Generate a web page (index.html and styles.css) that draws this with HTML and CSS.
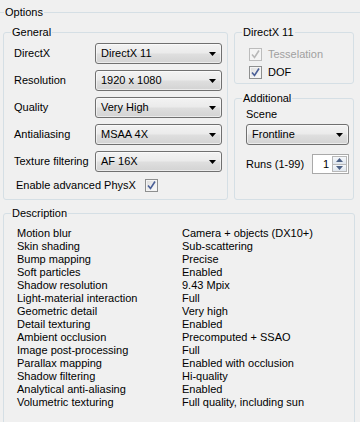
FILE: index.html
```html
<!DOCTYPE html>
<html lang="en">

<head>
    <meta charset="UTF-8">
    <meta name="viewport" content="width=device-width, initial-scale=1.0">
    <title>Options</title>
    <link rel="stylesheet" href="styles.css">
</head>

<body>
    <fieldset class="group options">
        <legend>Options</legend>
        <div class="options-body">
            <div class="top-row">
                <fieldset class="group general">
                    <legend>General</legend>
                    <div class="group-body">
                        <div class="form-grid">
                            <label>DirectX</label>
                            <div class="combo"><span>DirectX 11</span><svg class="arrow" width="7" height="4" viewBox="0 0 7 4"><path d="M0 0H7L3.5 4Z" /></svg></div>

                            <label>Resolution</label>
                            <div class="combo"><span>1920 x 1080</span><svg class="arrow" width="7" height="4" viewBox="0 0 7 4"><path d="M0 0H7L3.5 4Z" /></svg></div>

                            <label>Quality</label>
                            <div class="combo"><span>Very High</span><svg class="arrow" width="7" height="4" viewBox="0 0 7 4"><path d="M0 0H7L3.5 4Z" /></svg></div>

                            <label>Antialiasing</label>
                            <div class="combo"><span>MSAA 4X</span><svg class="arrow" width="7" height="4" viewBox="0 0 7 4"><path d="M0 0H7L3.5 4Z" /></svg></div>

                            <label>Texture filtering</label>
                            <div class="combo"><span>AF 16X</span><svg class="arrow" width="7" height="4" viewBox="0 0 7 4"><path d="M0 0H7L3.5 4Z" /></svg></div>
                        </div>
                        <div class="physx">
                            <span>Enable advanced PhysX</span>
                            <span class="check"><svg width="9" height="9" viewBox="0 0 9 9"><path d="M1 4.5L3.5 7.5L8 0.5" /></svg></span>
                        </div>
                    </div>
                </fieldset>

                <div class="side">
                    <fieldset class="group dx11">
                        <legend>DirectX 11</legend>
                        <div class="group-body">
                            <div class="check-row disabled">
                                <span class="check"><svg width="9" height="9" viewBox="0 0 9 9"><path d="M1 4.5L3.5 7.5L8 0.5" /></svg></span>
                                <span>Tesselation</span>
                            </div>
                            <div class="check-row">
                                <span class="check"><svg width="9" height="9" viewBox="0 0 9 9"><path d="M1 4.5L3.5 7.5L8 0.5" /></svg></span>
                                <span>DOF</span>
                            </div>
                        </div>
                    </fieldset>

                    <fieldset class="group additional">
                        <legend>Additional</legend>
                        <div class="group-body">
                            <div class="scene-label">Scene</div>
                            <div class="combo scene"><span>Frontline</span><svg class="arrow" width="7" height="4" viewBox="0 0 7 4"><path d="M0 0H7L3.5 4Z" /></svg></div>
                            <div class="runs">
                                <span>Runs (1-99)</span>
                                <div class="spin">
                                    <span class="spin-value">1</span>
                                    <div class="spin-buttons">
                                        <span class="spin-btn"><svg width="7" height="4" viewBox="0 0 7 4"><path d="M0 4H7L3.5 0Z" /></svg></span>
                                        <span class="spin-btn"><svg width="7" height="4" viewBox="0 0 7 4"><path d="M0 0H7L3.5 4Z" /></svg></span>
                                    </div>
                                </div>
                            </div>
                        </div>
                    </fieldset>
                </div>
            </div>

            <fieldset class="group description">
                <legend>Description</legend>
                <div class="group-body desc-grid">
                    <span>Motion blur</span><span>Camera + objects (DX10+)</span>
                    <span>Skin shading</span><span>Sub-scattering</span>
                    <span>Bump mapping</span><span>Precise</span>
                    <span>Soft particles</span><span>Enabled</span>
                    <span>Shadow resolution</span><span>9.43 Mpix</span>
                    <span>Light-material interaction</span><span>Full</span>
                    <span>Geometric detail</span><span>Very high</span>
                    <span>Detail texturing</span><span>Enabled</span>
                    <span>Ambient occlusion</span><span>Precomputed + SSAO</span>
                    <span>Image post-processing</span><span>Full</span>
                    <span>Parallax mapping</span><span>Enabled with occlusion</span>
                    <span>Shadow filtering</span><span>Hi-quality</span>
                    <span>Analytical anti-aliasing</span><span>Enabled</span>
                    <span>Volumetric texturing</span><span>Full quality, including sun</span>
                </div>
            </fieldset>
        </div>
    </fieldset>
</body>

</html>
```

FILE: styles.css
```css
/* Classic Windows 7 dialog look */
html {
    overflow: hidden;
}

body {
    font-family: "Liberation Sans", Arial, sans-serif;
    font-size: 11px;
    line-height: 13px;
    color: #000;
    margin: 0;
    padding: 0;
    background-color: #f0f0f0;
    width: 360px;
    height: 422px;
    overflow: hidden;
}

/* Group boxes */
.group {
    margin: 0;
    padding: 0;
    min-width: 0;
    border: 1px solid #d5dfe5;
    border-radius: 3px;
}

.group legend {
    margin-left: 7px;
    padding: 0 1px;
    line-height: 13px;
}

.options {
    margin: 6px 0 0 -4px;
    width: 380px;
    height: 430px;
    box-sizing: border-box;
}

.options-body {
    padding: 7px 0 0 6px;
}

.top-row {
    display: flex;
    gap: 6px;
}

/* General */
.general {
    width: 225px;
    box-sizing: border-box;
}

.general .group-body {
    padding: 4px 5px 7px 10px;
}

.form-grid {
    display: grid;
    grid-template-columns: 81px 127px;
    row-gap: 6px;
    align-items: center;
}

.combo {
    height: 21px;
    box-sizing: border-box;
    display: flex;
    align-items: center;
    justify-content: space-between;
    padding: 0 5px 0 5px;
    border: 1px solid #707070;
    border-radius: 3px;
    background: linear-gradient(#f3f3f3 0%, #ebebeb 45%, #dedede 55%, #d3d3d3 100%);
    box-shadow: inset 0 0 0 1px rgba(255, 255, 255, 0.55);
}

.arrow {
    fill: #000;
    margin-top: 1px;
}

.physx {
    display: flex;
    align-items: center;
    gap: 9px;
    margin-top: 7px;
    padding-left: 2px;
}

/* Checkboxes */
.check {
    width: 13px;
    height: 13px;
    box-sizing: border-box;
    border: 1px solid #8e8f8f;
    background: linear-gradient(135deg, #dcdcdc, #fdfdfd);
    box-shadow: inset 0 0 0 1px #f4f4f4;
    display: flex;
    align-items: center;
    justify-content: center;
}

.check svg {
    fill: none;
    stroke: #4a5f97;
    stroke-width: 1.6;
}

.check-row {
    display: flex;
    align-items: center;
    gap: 6px;
    height: 13px;
}

.check-row+.check-row {
    margin-top: 5px;
}

.check-row.disabled {
    color: #a0a0a0;
}

.check-row.disabled .check {
    border-color: #bcbcbc;
    background: #f4f4f4;
}

.check-row.disabled .check svg {
    stroke: #b8b8b8;
}

/* Right column */
.side {
    width: 120px;
    display: flex;
    flex-direction: column;
}

.dx11 .group-body {
    padding: 9px 0 4px 14px;
}

.additional {
    flex: 1;
    margin-top: 8px;
}

.additional .group-body {
    padding: 3px 4px 0 11px;
}

.scene-label {
    height: 13px;
}

.combo.scene {
    margin-top: 3px;
}

.runs {
    display: flex;
    align-items: center;
    justify-content: space-between;
    margin-top: 9px;
}

.spin {
    width: 37px;
    height: 20px;
    box-sizing: border-box;
    border: 1px solid #a9a9a9;
    background-color: #fff;
    display: flex;
    align-items: center;
    justify-content: flex-end;
    padding: 1px;
}

.spin-value {
    padding-right: 3px;
}

.spin-buttons {
    display: flex;
    flex-direction: column;
    height: 100%;
    width: 15px;
}

.spin-btn {
    flex: 1;
    display: flex;
    align-items: center;
    justify-content: center;
    border: 1px solid #b8b8b8;
    background: linear-gradient(#f6f8fb, #dfe6ee);
}

.spin-btn+.spin-btn {
    border-top: none;
}

.spin-btn svg {
    fill: #4d6185;
}

/* Description */
.description {
    width: 352px;
    box-sizing: border-box;
    margin-top: 7px;
    height: 230px;
}

.desc-grid {
    display: grid;
    grid-template-columns: 165px auto;
    padding: 7px 0 0 13px;
}
```
